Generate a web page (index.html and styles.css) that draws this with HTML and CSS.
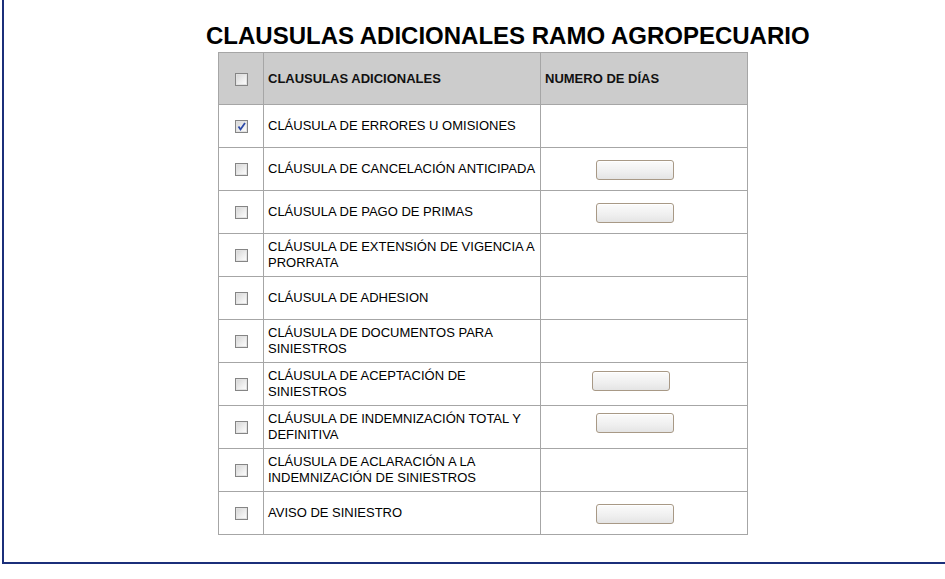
FILE: index.html
```html
<!DOCTYPE html>
<html lang="es">
<head>
<meta charset="utf-8">
<title>Clausulas adicionales</title>
<link rel="stylesheet" href="styles.css">
</head>
<body>
<div class="frame">
  <h1 class="title">CLAUSULAS ADICIONALES RAMO AGROPECUARIO</h1>
  <table class="grid">
    <colgroup><col class="c1"><col class="c2"><col class="c3"></colgroup>
    <thead>
      <tr><th class="chk"><span class="cb"></span></th><th>CLAUSULAS ADICIONALES</th><th>NUMERO DE DÍAS</th></tr>
    </thead>
    <tbody>
      <tr><td class="chk"><span class="cb on"><svg viewBox="0 0 13 13" width="13" height="13"><path d="M3.5 6.5 L5.5 9.5 L10 3" fill="none" stroke="#2c4aa8" stroke-width="1.8"/></svg></span></td><td>CLÁUSULA DE ERRORES U OMISIONES</td><td></td></tr>
      <tr><td class="chk"><span class="cb"></span></td><td>CLÁUSULA DE CANCELACIÓN ANTICIPADA</td><td class="num"><input class="box" type="text"></td></tr>
      <tr><td class="chk"><span class="cb"></span></td><td>CLÁUSULA DE PAGO DE PRIMAS</td><td class="num"><input class="box" type="text"></td></tr>
      <tr><td class="chk"><span class="cb"></span></td><td>CLÁUSULA DE EXTENSIÓN DE VIGENCIA A PRORRATA</td><td></td></tr>
      <tr><td class="chk"><span class="cb"></span></td><td>CLÁUSULA DE ADHESION</td><td></td></tr>
      <tr><td class="chk"><span class="cb"></span></td><td>CLÁUSULA DE DOCUMENTOS PARA SINIESTROS</td><td></td></tr>
      <tr><td class="chk"><span class="cb"></span></td><td>CLÁUSULA DE ACEPTACIÓN DE SINIESTROS</td><td class="num alt top"><input class="box up8" type="text"></td></tr>
      <tr><td class="chk"><span class="cb"></span></td><td>CLÁUSULA DE INDEMNIZACIÓN TOTAL Y DEFINITIVA</td><td class="num top"><input class="box up7" type="text"></td></tr>
      <tr><td class="chk"><span class="cb"></span></td><td>CLÁUSULA DE ACLARACIÓN A LA INDEMNIZACIÓN DE SINIESTROS</td><td></td></tr>
      <tr><td class="chk"><span class="cb"></span></td><td>AVISO DE SINIESTRO</td><td class="num"><input class="box" type="text"></td></tr>
    </tbody>
  </table>
</div>
</body>
</html>
```
FILE: styles.css
```css
html, body {
  margin: 0;
  padding: 0;
  background: #fff;
  overflow: hidden;
}
body {
  font-family: "Liberation Sans", Arial, sans-serif;
  color: #000;
}
.frame {
  margin-left: 2px;
  height: 542px;
  border-left: 2px solid #1b2f7a;
  border-bottom: 2px solid #1b2f7a;
  padding-top: 20px;
  box-sizing: content-box;
}
.title {
  margin: 0 0 0 202px;
  font-size: 24px;
  font-weight: bold;
  line-height: 32px;
  height: 32px;
  white-space: nowrap;
}
.grid {
  margin-left: 214px;
  border-collapse: collapse;
  width: 529px;
  table-layout: fixed;
}
.c1 { width: 45px; }
.c2 { width: 277px; }
.c3 { width: 207px; }
.grid th, .grid td {
  border: 1px solid #a6a6a6;
  padding: 0 4px;
  text-align: left;
  vertical-align: middle;
  font-size: 13px;
  line-height: 16px;
}
.grid thead th {
  background: #cccccc;
  height: 51px;
  font-weight: bold;
  font-size: 13px;
  color: #111;
}
.grid tbody td {
  height: 42px;
}
.grid .chk {
  text-align: center;
  padding: 0;
}
.cb {
  display: inline-block;
  width: 13px;
  height: 13px;
  box-sizing: border-box;
  border: 1px solid #858585;
  background: linear-gradient(135deg, #d4d4d4 0%, #efefef 60%, #ffffff 100%);
  box-shadow: inset 0 0 0 1px #e2e2e2;
  vertical-align: middle;
  position: relative;
}
.cb svg {
  position: absolute;
  left: -1px;
  top: -1px;
}
.grid td.num {
  padding-left: 55px;
}
.grid td.num.alt {
  padding-left: 51px;
}
.grid td.num.top {
  vertical-align: top;
}
.box {
  display: block;
  width: 78px;
  height: 20px;
  box-sizing: border-box;
  margin: 2px 0 0 0;
  padding: 0;
  border: 1px solid #a89986;
  border-radius: 3px;
  background: linear-gradient(#fbfbfb 0%, #efefef 60%, #e4e4e4 100%);
  box-shadow: inset 0 1px 0 #ffffff;
}
.box.up8 { margin-top: 8px; }
.box.up7 { margin-top: 7px; }
```
